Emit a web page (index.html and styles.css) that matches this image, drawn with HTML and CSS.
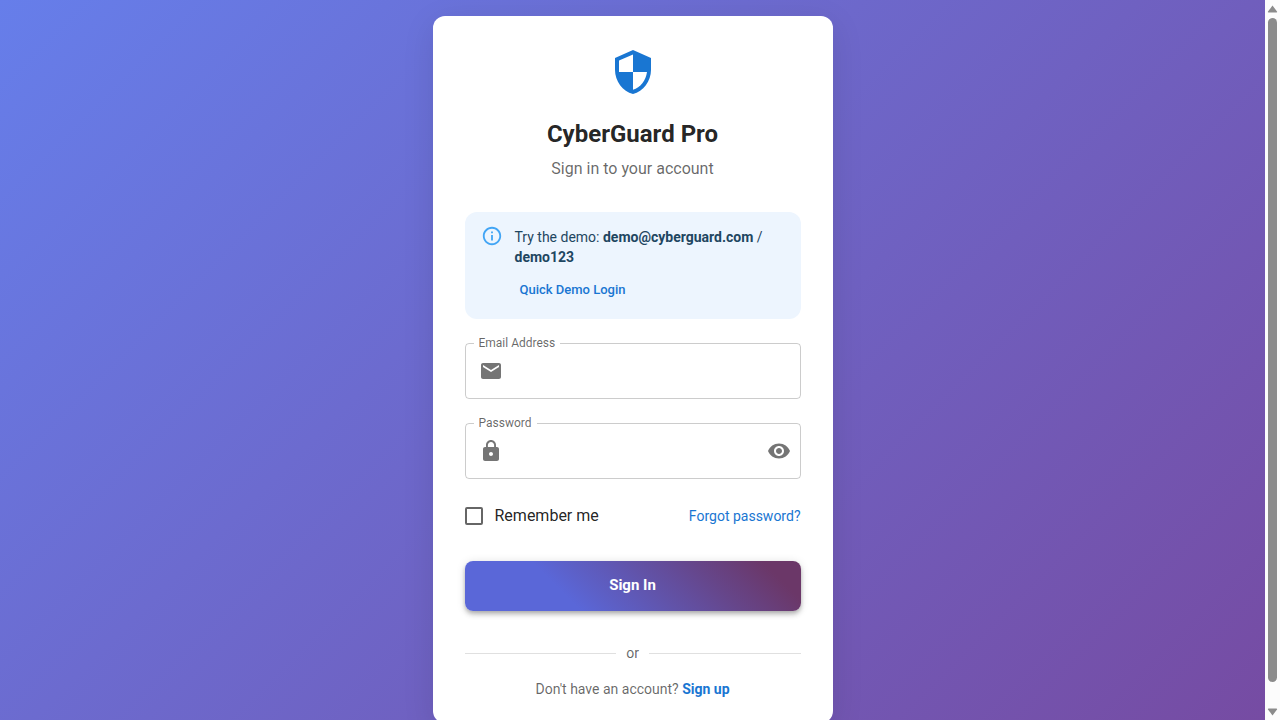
FILE: index.html
```html
<!DOCTYPE html>
<html lang="en">
<head>
<meta charset="utf-8">
<meta name="viewport" content="width=device-width, initial-scale=1">
<title>CyberGuard Pro</title>
<link rel="stylesheet" href="styles.css">
</head>
<body>
<div class="viewport">
<main class="page">
  <section class="card">
    <header class="brand">
      <svg class="brand-icon" viewBox="0 0 24 24" aria-hidden="true"><path d="M12 1 3 5v6c0 5.550 3.840 10.740 9 12 5.160-1.260 9-6.450 9-12V5l-9-4zm0 10.990h7c-.530 4.120-3.280 7.790-7 8.940V12H5V6.300l7-3.110v8.800z"/></svg>
      <h1 class="brand-title">CyberGuard Pro</h1>
      <p class="brand-subtitle">Sign in to your account</p>
    </header>

    <div class="alert">
      <svg class="alert-icon" viewBox="0 0 24 24" aria-hidden="true"><path d="M11 7h2v2h-2zm0 4h2v6h-2zm1-9C6.480 2 2 6.480 2 12s4.480 10 10 10 10-4.480 10-10S17.520 2 12 2zm0 18c-4.410 0-8-3.590-8-8s3.590-8 8-8 8 3.590 8 8-3.590 8-8 8z"/></svg>
      <div class="alert-body">
        <p class="alert-text">Try the demo: <strong>demo@cyberguard.com</strong> / <strong>demo123</strong></p>
        <button class="demo-button" type="button">Quick Demo Login</button>
      </div>
    </div>

    <form class="form">
      <fieldset class="field">
        <legend class="field-legend"><label for="email">Email Address</label></legend>
        <div class="field-row">
          <svg class="icon" viewBox="0 0 24 24" aria-hidden="true"><path d="M20 4H4c-1.100 0-1.990.900-1.990 2L2 18c0 1.100.900 2 2 2h16c1.100 0 2-.900 2-2V6c0-1.100-.900-2-2-2zm0 4-8 5-8-5V6l8 5 8-5v2z"/></svg>
          <input class="field-input" id="email" type="email">
        </div>
      </fieldset>
      <fieldset class="field">
        <legend class="field-legend"><label for="password">Password</label></legend>
        <div class="field-row">
          <svg class="icon" viewBox="0 0 24 24" aria-hidden="true"><path d="M18 8h-1V6c0-2.760-2.240-5-5-5S7 3.240 7 6v2H6c-1.100 0-2 .900-2 2v10c0 1.100.900 2 2 2h12c1.100 0 2-.900 2-2V10c0-1.100-.900-2-2-2zm-6 9c-1.100 0-2-.900-2-2s.900-2 2-2 2 .900 2 2-.900 2-2 2zm3.100-9H8.900V6c0-1.710 1.390-3.100 3.100-3.100 1.710 0 3.100 1.390 3.100 3.100v2z"/></svg>
          <input class="field-input" id="password" type="password">
          <button class="icon-button" type="button" aria-label="Show password">
            <svg class="icon" viewBox="0 0 24 24" aria-hidden="true"><path d="M12 4.500C7 4.500 2.730 7.610 1 12c1.730 4.390 6 7.500 11 7.500s9.270-3.110 11-7.500c-1.730-4.390-6-7.500-11-7.500zM12 17c-2.760 0-5-2.240-5-5s2.240-5 5-5 5 2.240 5 5-2.240 5-5 5zm0-8c-1.660 0-3 1.340-3 3s1.340 3 3 3 3-1.340 3-3-1.340-3-3-3z"/></svg>
          </button>
        </div>
      </fieldset>

      <div class="options">
        <label class="remember"><input class="checkbox" type="checkbox">Remember me</label>
        <a class="link" href="#">Forgot password?</a>
      </div>

      <button class="submit" type="submit">Sign In</button>
    </form>

    <div class="divider">or</div>
    <p class="signup">Don't have an account? <a class="link link-strong" href="#">Sign up</a></p>
  </section>
</main>
<div class="scrollbar" aria-hidden="true">
  <svg class="scrollbar-arrow" viewBox="0 0 11 8"><path d="M5.500 0.500 10 6.500Q10.500 7.500 9.500 7.500H1.500Q0.500 7.500 1 6.500z"/></svg>
  <div class="scrollbar-track"><div class="scrollbar-thumb"></div></div>
  <svg class="scrollbar-arrow" viewBox="0 0 11 8"><path d="M5.500 7.500 1 1.500Q0.500 0.500 1.500 0.500H9.500Q10.500 0.500 10 1.500z"/></svg>
</div>
</div>
</body>
</html>
```

FILE: styles.css
```css
* {
  box-sizing: border-box;
}

html {
  scrollbar-width: none;
}

body {
  margin: 0;
  font-family: Roboto, "Liberation Sans", sans-serif;
  font-size: 14px;
  line-height: 20px;
  color: rgba(0, 0, 0, 0.87);
}

h1,
p {
  margin: 0;
}

button,
input {
  font-family: inherit;
}

.viewport {
  display: flex;
  align-items: stretch;
}

.page {
  flex: 1;
  min-width: 0;
  display: flex;
  align-items: center;
  justify-content: center;
  min-height: 100vh;
  padding: 16px;
  background: linear-gradient(135deg, #667eea 0%, #764ba2 100%);
}

.scrollbar {
  position: sticky;
  top: 0;
  flex: none;
  display: flex;
  flex-direction: column;
  align-items: center;
  gap: 5px;
  width: 15px;
  height: 100vh;
  padding: 5px 0 4px;
  background: #fcfcfc;
}

.scrollbar-arrow {
  display: block;
  flex: none;
  width: 11px;
  height: 8px;
  fill: #8b8b8b;
}

.scrollbar-track {
  flex: 1;
  width: 9px;
}

.scrollbar-thumb {
  height: 97%;
  border-radius: 5px;
  background: #8b8b8b;
}

.card {
  width: 100%;
  max-width: 400px;
  padding: 32px 32px 24px;
  border-radius: 12px;
  background: #fff;
  box-shadow: 0 8px 32px rgba(0, 0, 0, 0.1);
}

.brand {
  display: flex;
  flex-direction: column;
  align-items: center;
  margin-bottom: 31px;
  text-align: center;
}

.brand-icon {
  width: 48px;
  height: 48px;
  margin-bottom: 22px;
  fill: #1976d2;
}

.brand-title {
  margin-bottom: 7px;
  font-size: 24px;
  font-weight: 700;
  line-height: 32px;
}

.brand-subtitle {
  font-size: 16px;
  line-height: 24px;
  color: rgba(0, 0, 0, 0.6);
}

.alert {
  display: flex;
  gap: 12px;
  margin-bottom: 18px;
  padding: 15px 16px 14px;
  border-radius: 12px;
  background: #edf5fe;
  color: #1e4661;
}

.alert-icon {
  flex: none;
  width: 22px;
  height: 22px;
  margin-top: -2px;
  fill: #42a5f5;
}

.alert-body {
  min-width: 0;
}

.demo-button {
  display: block;
  margin-top: 7px;
  padding: 4px 5px;
  border: 0;
  border-radius: 4px;
  background: transparent;
  font-size: 13px;
  font-weight: 500;
  line-height: 23px;
  color: #1976d2;
  cursor: pointer;
}

.form {
  display: flex;
  flex-direction: column;
  gap: 18px;
}

.field {
  min-width: 0;
  margin: 0;
  padding: 0 9px 5px 8px;
  border: 1px solid rgba(0, 0, 0, 0.2);
  border-radius: 4px;
}

.field-legend {
  padding: 0 5px;
  font-size: 12px;
  line-height: 12px;
  color: rgba(0, 0, 0, 0.6);
}

.field-row {
  display: flex;
  align-items: center;
  gap: 8px;
  height: 44px;
  padding-left: 5px;
}

.icon {
  display: block;
  flex: none;
  width: 24px;
  height: 24px;
  fill: rgba(0, 0, 0, 0.54);
}

.field-input {
  flex: 1;
  min-width: 0;
  padding: 8px 0;
  border: 0;
  outline: 0;
  background: transparent;
  font-size: 16px;
}

.icon-button {
  padding: 0;
  border: 0;
  background: transparent;
  cursor: pointer;
}

.options {
  display: flex;
  align-items: center;
  justify-content: space-between;
  padding: 7px 0 15px;
}

.remember {
  display: flex;
  align-items: center;
  gap: 12px;
  font-size: 16px;
  line-height: 24px;
}

.checkbox {
  appearance: none;
  width: 18px;
  height: 18px;
  margin: 0;
  border: 2px solid rgba(0, 0, 0, 0.6);
  border-radius: 2px;
}

.checkbox:checked {
  border-color: #1976d2;
  background: #1976d2;
}

.link {
  color: #1976d2;
  text-decoration: none;
}

.link-strong {
  font-weight: 700;
}

.submit {
  padding: 12px 16px 14px;
  border: 0;
  border-radius: 8px;
  background: linear-gradient(45deg, #5a67d8 30%, #6b3768 90%);
  box-shadow: 0 2px 4px -1px rgba(0, 0, 0, 0.2), 0 4px 5px 0 rgba(0, 0, 0, 0.14), 0 1px 10px 0 rgba(0, 0, 0, 0.12);
  font-size: 15px;
  font-weight: 700;
  line-height: 24px;
  color: #fff;
  cursor: pointer;
}

.divider {
  display: flex;
  align-items: center;
  gap: 10px;
  margin: 32px 0 16px;
  color: rgba(0, 0, 0, 0.6);
}

.divider::before,
.divider::after {
  content: "";
  flex: 1;
  border-top: 1px solid rgba(0, 0, 0, 0.12);
}

.signup {
  text-align: center;
  color: rgba(0, 0, 0, 0.6);
}
```
